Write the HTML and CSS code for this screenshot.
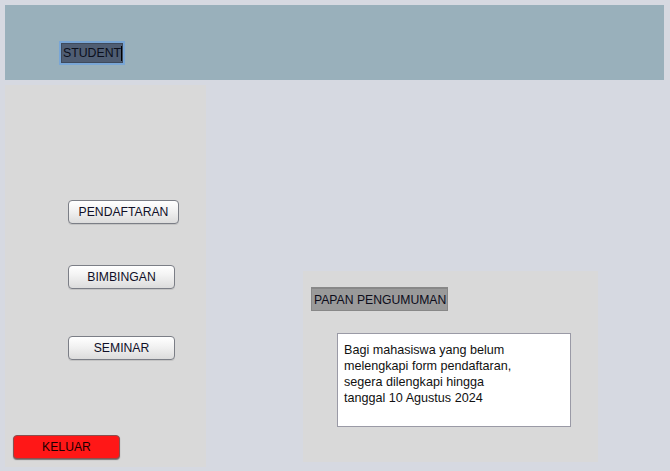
FILE: index.html
```html
<!DOCTYPE html>
<html>
<head>
<meta charset="utf-8">
<link rel="stylesheet" href="styles.css">
</head>
<body>
<div class="app">
  <header class="header">
    <div class="field"><span class="field-text">STUDENT</span><span class="caret"></span></div>
  </header>
  <div class="main">
    <aside class="sidebar">
      <div class="nav">
        <button class="btn btn-wide">PENDAFTARAN</button>
        <button class="btn btn-b">BIMBINGAN</button>
        <button class="btn btn-s">SEMINAR</button>
      </div>
      <button class="btn-exit">KELUAR</button>
    </aside>
    <section class="content">
      <div class="board">
        <div class="board-title">PAPAN PENGUMUMAN</div>
        <div class="board-text">Bagi mahasiswa yang belum<br>melengkapi form pendaftaran,<br>segera dilengkapi hingga<br>tanggal 10 Agustus 2024</div>
      </div>
    </section>
  </div>
</div>
</body>
</html>
```

FILE: styles.css
```css
html, body {
  margin: 0;
  padding: 0;
  background: #d6d9e1;
  font-family: "Liberation Sans", Arial, sans-serif;
  font-size: 12px;
  color: #111;
}
.app {
  width: 670px;
  height: 471px;
  box-sizing: border-box;
  padding: 5px 6px 0 5px;
  display: flex;
  flex-direction: column;
}
.header {
  height: 75px;
  background: #99b0bb;
  display: flex;
  align-items: flex-start;
  padding: 36px 0 0 54px;
  box-sizing: border-box;
}
.field {
  width: 66px;
  height: 24px;
  box-sizing: border-box;
  background: #4f5d73;
  border: 2px solid #79a6d6;
  box-shadow: inset 0 0 0 1px #3e4a5c;
  display: flex;
  align-items: center;
  padding-left: 2px;
  font-size: 12.3px;
  color: #0b0f1c;
}
.caret {
  width: 1px;
  height: 15px;
  background: #000;
}
.main {
  display: flex;
  margin-top: 5px;
  flex: 1;
}
.sidebar {
  width: 201px;
  height: 382px;
  background: #d9d9d9;
  display: flex;
  flex-direction: column;
  align-items: flex-start;
}
.nav {
  display: flex;
  flex-direction: column;
  align-items: flex-start;
  padding: 115px 0 0 63px;
}
.btn {
  height: 24px;
  box-sizing: border-box;
  border: 1px solid #7b7e86;
  border-radius: 4px;
  background: linear-gradient(#ffffff, #f3f3f3 40%, #dcdcdc);
  font-family: "Liberation Sans", Arial, sans-serif;
  font-size: 12.2px;
  color: #101028;
  padding: 0;
  box-shadow: 0 1px 0 #c4c4c4;
}
.btn-wide { width: 111px; }
.btn-b { width: 107px; margin-top: 41px; }
.btn-s { width: 107px; margin-top: 47px; }
.btn-exit {
  margin: 75px 0 0 8px;
  width: 107px;
  height: 24px;
  box-sizing: border-box;
  background: #ff1717;
  border: 1px solid #8a5050;
  border-radius: 4px;
  font-family: "Liberation Sans", Arial, sans-serif;
  font-size: 12.2px;
  color: #1a0000;
  padding: 0;
  box-shadow: 0 1px 1px #777;
}
.content {
  flex: 1;
  padding: 186px 0 0 97px;
}
.board {
  width: 295px;
  height: 191px;
  background: #d9d9d9;
  box-sizing: border-box;
  padding: 16px 0 0 8px;
}
.board-title {
  width: 137px;
  height: 24px;
  box-sizing: border-box;
  background: #9a9a9a;
  border: 1px solid #888;
  border-top-width: 2px;
  display: flex;
  align-items: center;
  padding-left: 2px;
  color: #0d0d1a;
  font-size: 12.2px;
}
.board-text {
  margin: 22px 0 0 26px;
  width: 234px;
  height: 94px;
  box-sizing: border-box;
  background: #fff;
  border: 1px solid #9a9aa6;
  padding: 8px 0 0 6px;
  font-size: 12.6px;
  line-height: 16px;
  color: #111;
}
```
